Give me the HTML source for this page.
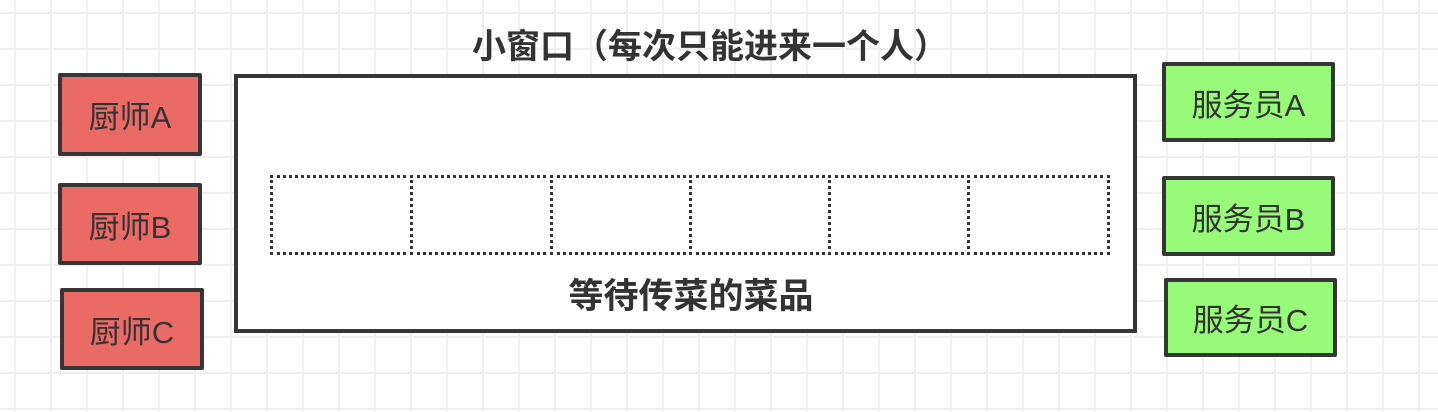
<!DOCTYPE html>
<html><head><meta charset="utf-8"><style>
body{margin:0;width:1438px;height:412px;overflow:hidden;background:#fff;
background-image:linear-gradient(#efefef 2px,transparent 2px),linear-gradient(90deg,#efefef 2px,transparent 2px);
background-size:36px 36px;background-position:14px 12px;position:relative;
font-family:"Liberation Sans","Noto Sans CJK SC",sans-serif;color:#333}
.b{position:absolute;box-sizing:border-box;border:4px solid #363636;border-radius:2px;display:flex;align-items:center;justify-content:center;font-size:31px}
.r{background:#ea6b66}.g{background:#97fa78}
.t{position:absolute;font-weight:bold;white-space:nowrap;transform:translateX(-50%);line-height:1}
.c{position:absolute;top:175px;height:80px;box-sizing:border-box;border:3px dotted #333}
</style></head><body>
<div class="t" style="left:710px;top:30px;font-size:34px">小窗口（每次只能进来一个人）</div>
<div class="b r" style="left:58px;top:73px;width:144px;height:83px">厨师A</div>
<div class="b r" style="left:58px;top:183px;width:144px;height:82px">厨师B</div>
<div class="b r" style="left:60px;top:288px;width:144px;height:82px">厨师C</div>
<div style="position:absolute;left:234px;top:74px;width:903px;height:259px;box-sizing:border-box;border:4px solid #363636;background:#fff"></div>
<div class="c" style="left:270px;width:143px"></div>
<div class="c" style="left:410px;width:143px"></div>
<div class="c" style="left:550px;width:142px"></div>
<div class="c" style="left:689px;width:142px"></div>
<div class="c" style="left:828px;width:142px"></div>
<div class="c" style="left:967px;width:143px"></div>
<div class="t" style="left:691px;top:279px;font-size:35px">等待传菜的菜品</div>
<div class="b g" style="left:1162px;top:62px;width:173px;height:80px">服务员A</div>
<div class="b g" style="left:1162px;top:176px;width:173px;height:80px">服务员B</div>
<div class="b g" style="left:1164px;top:278px;width:173px;height:79px">服务员C</div>
</body></html>
